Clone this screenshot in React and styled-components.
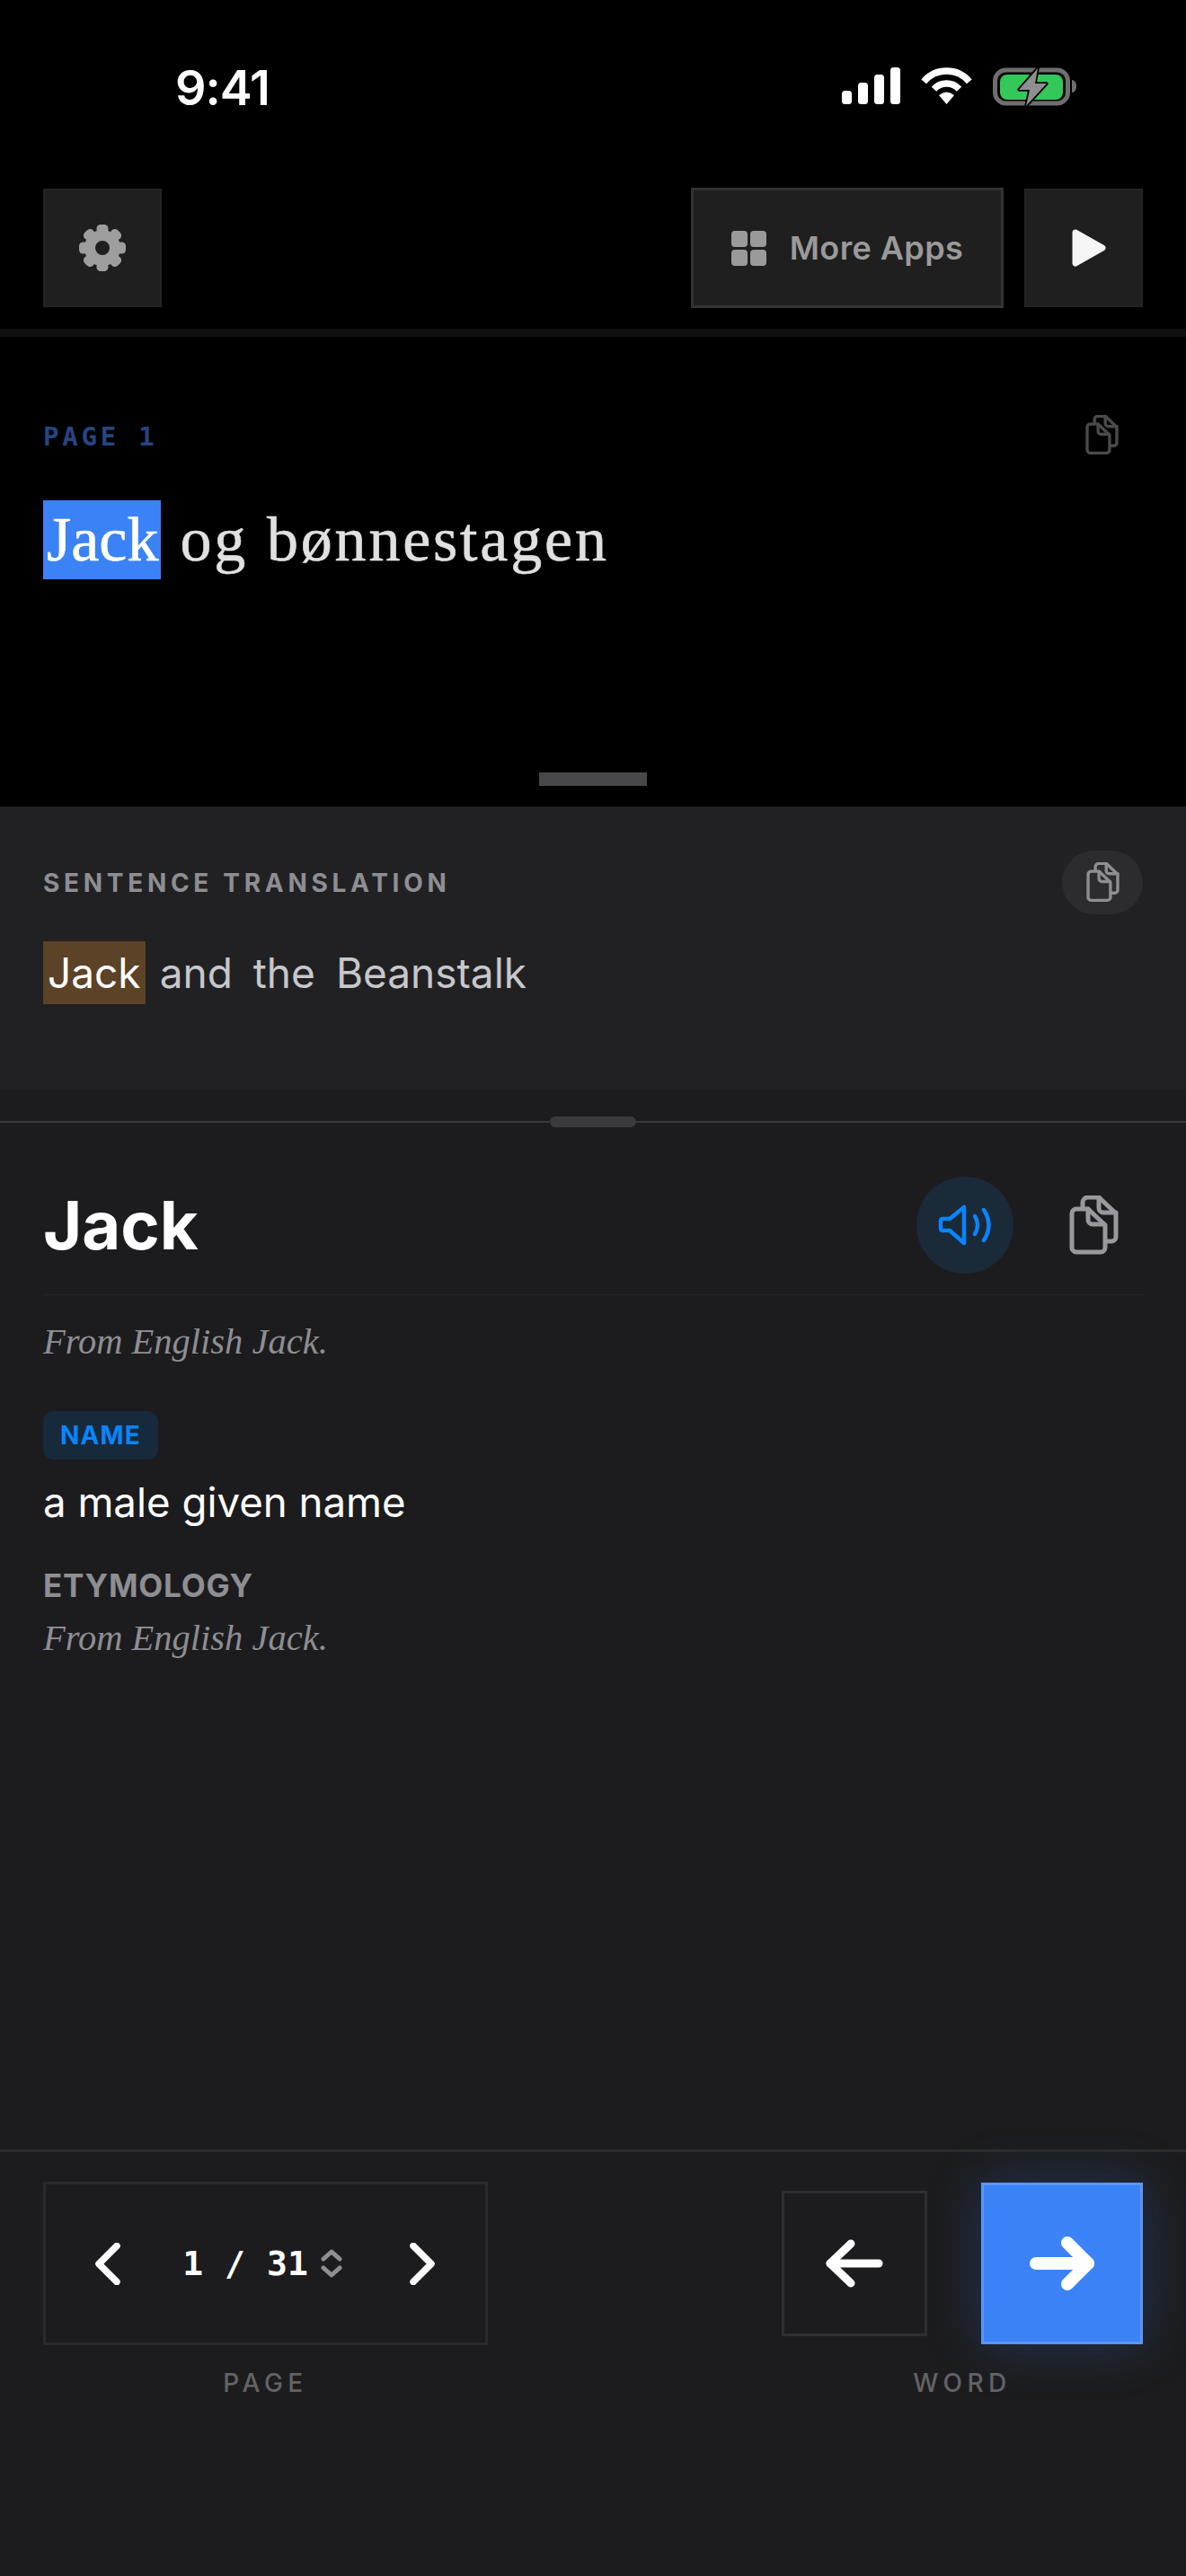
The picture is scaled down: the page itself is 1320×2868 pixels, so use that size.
import React from "react";
import styled, { createGlobalStyle } from "styled-components";

const Global = createGlobalStyle`
  * { box-sizing: border-box; }
  html, body { margin: 0; padding: 0; background: #000; }
  body { font-family: Inter, "Noto Sans", sans-serif; }
`;

const Screen = styled.div`
  width: 1320px;
  height: 2868px;
  display: flex;
  flex-direction: column;
  background: #000;
  overflow: hidden;
`;

const StatusBar = styled.div`
  height: 210px;
  flex: none;
  display: flex;
  justify-content: space-between;
  align-items: flex-start;
  padding: 75px 121px 0 195px;
`;
const Clock = styled.div`
  font-size: 54px;
  line-height: 46px;
  font-weight: 600;
  letter-spacing: -1px;
  color: #fff;
`;
const StatusIcons = styled.div`
  display: flex;
  align-items: flex-start;
  gap: 23px;
`;

const Toolbar = styled.div`
  height: 165px;
  flex: none;
  display: flex;
  align-items: flex-start;
  gap: 23px;
  padding: 0 48px;
  border-bottom: 9px solid #101010;
`;
const ToolButton = styled.button`
  width: 132px;
  height: 132px;
  flex: none;
  margin: 0;
  padding: 0;
  display: flex;
  align-items: center;
  justify-content: center;
  background: #1f1f1f;
  border: 2px solid #242424;
`;
const AppsButton = styled.button`
  width: 348px;
  height: 134px;
  margin: -1px 0 0 auto;
  padding: 0;
  display: flex;
  align-items: center;
  justify-content: center;
  gap: 26px;
  background: #1f1f1f;
  border: 3px solid #333;
  color: #9a9a9a;
  font-family: Inter, sans-serif;
  font-size: 36px;
  font-weight: 600;
  letter-spacing: 0.4px;
`;

const Reader = styled.section`
  height: 523px;
  flex: none;
  display: flex;
  flex-direction: column;
  padding: 87px 48px 23px;
  background: #000;
`;
const RowBetween = styled.div`
  display: flex;
  align-items: center;
  justify-content: space-between;
`;
const PageTag = styled.div`
  padding-top: 3px;
  font-family: "DejaVu Sans Mono", "Liberation Mono", monospace;
  font-size: 29px;
  font-weight: 700;
  letter-spacing: 3.8px;
  color: #27457f;
`;
const ReaderCopy = styled.div`
  display: flex;
  color: #4a4a4c;
  margin-right: 27px;
`;
const Sentence = styled.div`
  margin-top: 51px;
  display: flex;
  align-items: center;
  gap: 21px;
  font-family: "Liberation Serif", serif;
  font-size: 70px;
  letter-spacing: 2.8px;
  line-height: 88px;
  color: #e0e0e0;
  -webkit-text-stroke: 0.6px currentColor;
`;
const ActiveWord = styled.span`
  height: 88px;
  padding: 0 3px 0 4px;
  letter-spacing: 0;
  background: #3b82f6;
  color: #fff;
`;
const Grip = styled.div`
  width: 120px;
  height: 15px;
  margin: auto auto 0;
  background: #48484a;
`;

const Translation = styled.section`
  height: 315px;
  flex: none;
  padding: 49px 48px 0;
  background: #212123;
`;
const SectionLabel = styled.div`
  font-size: 28px;
  font-weight: 700;
  letter-spacing: 4.7px;
  color: #8e8e93;
`;
const CopyPill = styled.div`
  width: 90px;
  height: 71px;
  display: flex;
  align-items: center;
  justify-content: center;
  border-radius: 36px;
  background: #2c2c2e;
  color: #8e8e93;
`;
const TranslatedLine = styled.div`
  margin-top: 30px;
  display: flex;
  align-items: center;
  gap: 23px;
  font-size: 46px;
  line-height: 70px;
  color: #c7c7cc;
`;
const TranslatedWord = styled.span`
  height: 70px;
  padding: 0 5px;
  margin-right: -7px;
  background: #5c4227;
  color: #fff;
`;

const Lower = styled.div`
  flex: 1;
  display: flex;
  flex-direction: column;
  background: #1c1c1e;
`;
const SplitLine = styled.div`
  position: relative;
  margin-top: 35px;
  height: 2px;
  flex: none;
  background: #3a3a3c;
`;
const SplitHandle = styled.div`
  position: absolute;
  left: 612px;
  top: -5px;
  width: 96px;
  height: 12px;
  border-radius: 6px;
  background: #3a3a3c;
`;
const Dictionary = styled.section`
  flex: 1;
  padding: 0 48px;
`;
const EntryHeader = styled.div`
  display: flex;
  align-items: center;
  justify-content: space-between;
  padding: 60px 0 23px;
  border-bottom: 1.5px solid #252527;
`;
const Headword = styled.h1`
  margin: 0;
  font-size: 74px;
  line-height: 108px;
  font-weight: 700;
  color: #fff;
`;
const EntryActions = styled.div`
  display: flex;
  align-items: center;
  gap: 62px;
  padding-right: 27px;
`;
const SpeakButton = styled.div`
  width: 108px;
  height: 108px;
  border-radius: 50%;
  display: flex;
  align-items: center;
  justify-content: center;
  background: #1a2a38;
  color: #0a84ff;
`;
const EntryCopy = styled.div`
  display: flex;
  color: #98989d;
`;
const Gloss = styled.p`
  margin: ${(p) => p.$top}px 0 0;
  font-family: "Liberation Serif", serif;
  font-style: italic;
  font-size: 40.5px;
  line-height: 50px;
  color: #8e8e93;
`;
const PosBadge = styled.div`
  width: 128px;
  height: 54px;
  margin-top: 52px;
  display: flex;
  align-items: center;
  justify-content: center;
  border-radius: 12px;
  background: #172a3c;
  color: #0a84ff;
  font-size: 28px;
  font-weight: 700;
  letter-spacing: 1.2px;
`;
const Definition = styled.p`
  margin: 20px 0 0;
  font-size: 45.6px;
  line-height: 56px;
  color: #fff;
`;
const SubHeading = styled.h2`
  margin: 44px 0 0;
  font-size: 35px;
  line-height: 40px;
  font-weight: 700;
  letter-spacing: 0.8px;
  color: #8e8e93;
`;

const Footer = styled.footer`
  height: 475px;
  flex: none;
  display: flex;
  align-items: flex-start;
  justify-content: space-between;
  padding: 33px 48px 0;
  border-top: 3px solid #2c2c2e;
`;
const Group = styled.div`
  display: flex;
  flex-direction: column;
  align-items: center;
`;
const Controls = styled.div`
  height: 182px;
  display: flex;
  align-items: center;
`;
const GroupLabel = styled.div`
  margin-top: 27px;
  font-size: 28px;
  line-height: 30px;
  font-weight: 500;
  letter-spacing: 5.5px;
  color: #636366;
`;
const Pager = styled.div`
  width: 495px;
  height: 182px;
  display: flex;
  align-items: center;
  justify-content: space-between;
  padding: 0 56px 0 55px;
  border: 3px solid #2a2a2c;
`;
const PagerText = styled.div`
  display: flex;
  align-items: center;
  gap: 24px;
  margin-left: -6px;
  font-family: "DejaVu Sans Mono", "Liberation Mono", monospace;
  font-weight: 700;
  font-size: 38px;
  color: #fff;
`;
const PrevButton = styled.div`
  width: 162px;
  height: 162px;
  display: flex;
  align-items: center;
  justify-content: center;
  border: 3px solid #2f2f31;
`;
const NextButton = styled.div`
  width: 180px;
  height: 180px;
  margin-left: 60px;
  display: flex;
  align-items: center;
  justify-content: center;
  background: #3b82f6;
  border: 3px solid #5a96f8;
  box-shadow: 0 0 60px rgba(59, 130, 246, 0.25);
`;

const Signal = () => (
  <svg width="65" height="41" viewBox="0 0 65 41" fill="#fff">
    <rect x="0" y="26" width="11" height="15" rx="3.5" />
    <rect x="18" y="17" width="11" height="24" rx="3.5" />
    <rect x="36" y="8" width="11" height="33" rx="3.5" />
    <rect x="54" y="0" width="11" height="41" rx="3.5" />
  </svg>
);
const Wifi = () => (
  <svg width="57" height="41" viewBox="0 0 57 41" fill="none" stroke="#fff" strokeWidth="7.5">
    <path d="M3.2 15.8A33 33 0 0 1 53.8 15.8" />
    <path d="M14.5 24.2A19 19 0 0 1 42.5 24.2" />
    <path d="M28.5 41L20 31Q28.5 24 37 31Z" fill="#fff" stroke="none" />
  </svg>
);
const BatteryGlyph = styled.svg`
  overflow: visible;
`;
const Battery = () => (
  <BatteryGlyph width="94" height="44" viewBox="0 0 94 44">
    <rect x="2.5" y="3" width="81" height="37" rx="12" fill="none" stroke="#6e6e6e" strokeWidth="5" />
    <rect x="8" y="8" width="70" height="28" rx="8" fill="#34c759" />
    <path d="M88 14c3 0 5 3 5 7s-2 7-5 7z" fill="#6e6e6e" />
    <path d="M50 1L29 25H41L37 43L60 18H47Z" fill="#8e8e8e" stroke="#000" strokeWidth="3.5" strokeLinejoin="round" paintOrder="stroke" />
  </BatteryGlyph>
);
const Gear = () => (
  <svg width="52" height="52" viewBox="-26 -26 52 52" fill="#9e9e9e">
    <circle r="14" fill="none" stroke="#9e9e9e" strokeWidth="12" />
    {[0, 45, 90, 135, 180, 225, 270, 315].map((a) => (
      <rect key={a} x="-6.5" y="-26" width="13" height="10" rx="4.5" transform={`rotate(${a})`} />
    ))}
  </svg>
);
const AppsGrid = () => (
  <svg width="39" height="39" viewBox="0 0 39 39" fill="#9a9a9a">
    <rect width="18" height="18" rx="4" />
    <rect x="21" width="18" height="18" rx="4" />
    <rect y="21" width="18" height="18" rx="4" />
    <rect x="21" y="21" width="18" height="18" rx="4" />
  </svg>
);
const PlayGlyph = styled.svg`
  margin-left: 12px;
`;
const Play = () => (
  <PlayGlyph width="38" height="42" viewBox="0 0 38 42">
    <path d="M4 4L34 21L4 38Z" fill="#f5f5f5" stroke="#f5f5f5" strokeWidth="7" strokeLinejoin="round" />
  </PlayGlyph>
);
const CopyIcon = ({ w }) => (
  <svg width={w} height={(w * 66) / 55} viewBox="0 0 55 66" fill="none" stroke="currentColor" strokeWidth="5" strokeLinejoin="round" strokeLinecap="round">
    <path d="M8 15H21L40 33V58a5 5 0 0 1-5 5H8a5 5 0 0 1-5-5V20a5 5 0 0 1 5-5Z" />
    <path d="M21 15V27a5 5 0 0 0 5 5H39" />
    <path d="M15 13V8a6 6 0 0 1 6-6H33L52 20V46a5 5 0 0 1-5 5H42" />
    <path d="M33 2V14a5 5 0 0 0 5 5H52" />
  </svg>
);
const Speaker = () => (
  <svg width="60" height="48" viewBox="0 0 60 48" fill="none" stroke="currentColor" strokeWidth="4.5" strokeLinejoin="round" strokeLinecap="round">
    <path d="M3 19a2 2 0 0 1 2-2H13L29 4V44L13 30H5a2 2 0 0 1-2-2Z" />
    <path d="M41 14Q47 24 41 34" />
    <path d="M51 7Q62 24 51 41" />
  </svg>
);
const Chevron = ({ flip }) => (
  <svg width="28" height="47" viewBox="0 0 28 47" fill="none" stroke="#fff" strokeWidth="7.5" strokeLinecap="round" strokeLinejoin="round">
    <path d={flip ? "M4 3.5L24 23.5L4 43.5" : "M24 3.5L4 23.5L24 43.5"} />
  </svg>
);
const UpDownGlyph = styled.svg`
  margin-left: -10px;
`;
const UpDown = () => (
  <UpDownGlyph width="24" height="32" viewBox="0 0 24 32" fill="none" stroke="#8e8e93" strokeWidth="5" strokeLinecap="round" strokeLinejoin="round">
    <path d="M3 11L12 3L21 11" />
    <path d="M3 21L12 29L21 21" />
  </UpDownGlyph>
);
const ArrowLeft = () => (
  <svg width="64" height="54" viewBox="0 0 64 54" fill="none" stroke="#fff" strokeWidth="9" strokeLinecap="round" strokeLinejoin="round">
    <path d="M5 27H59" />
    <path d="M28 5L5 27L28 49" />
  </svg>
);
const ArrowRight = () => (
  <svg width="72" height="60" viewBox="0 0 72 60" fill="none" stroke="#fff" strokeWidth="14" strokeLinecap="round" strokeLinejoin="round">
    <path d="M7 30H65" />
    <path d="M42 7L65 30L42 53" />
  </svg>
);

export default function App() {
  return (
    <Screen>
      <Global />
      <StatusBar>
        <Clock>9:41</Clock>
        <StatusIcons>
          <Signal />
          <Wifi />
          <Battery />
        </StatusIcons>
      </StatusBar>
      <Toolbar>
        <ToolButton aria-label="Settings"><Gear /></ToolButton>
        <AppsButton><AppsGrid />More Apps</AppsButton>
        <ToolButton aria-label="Play"><Play /></ToolButton>
      </Toolbar>
      <Reader>
        <RowBetween>
          <PageTag>PAGE 1</PageTag>
          <ReaderCopy><CopyIcon w={37} /></ReaderCopy>
        </RowBetween>
        <Sentence>
          <ActiveWord>Jack</ActiveWord>
          <span>og</span>
          <span>bønnestagen</span>
        </Sentence>
        <Grip />
      </Reader>
      <Translation>
        <RowBetween>
          <SectionLabel>SENTENCE TRANSLATION</SectionLabel>
          <CopyPill><CopyIcon w={37} /></CopyPill>
        </RowBetween>
        <TranslatedLine>
          <TranslatedWord>Jack</TranslatedWord>
          <span>and</span>
          <span>the</span>
          <span>Beanstalk</span>
        </TranslatedLine>
      </Translation>
      <Lower>
        <SplitLine><SplitHandle /></SplitLine>
        <Dictionary>
          <EntryHeader>
            <Headword>Jack</Headword>
            <EntryActions>
              <SpeakButton><Speaker /></SpeakButton>
              <EntryCopy><CopyIcon w={55} /></EntryCopy>
            </EntryActions>
          </EntryHeader>
          <Gloss $top={27}>From English Jack.</Gloss>
          <PosBadge>NAME</PosBadge>
          <Definition>a male given name</Definition>
          <SubHeading>ETYMOLOGY</SubHeading>
          <Gloss $top={14}>From English Jack.</Gloss>
        </Dictionary>
        <Footer>
          <Group>
            <Controls>
              <Pager>
                <Chevron />
                <PagerText>
                  <span>1</span>
                  <span>/</span>
                  <span>31</span>
                  <UpDown />
                </PagerText>
                <Chevron flip />
              </Pager>
            </Controls>
            <GroupLabel>PAGE</GroupLabel>
          </Group>
          <Group>
            <Controls>
              <PrevButton><ArrowLeft /></PrevButton>
              <NextButton><ArrowRight /></NextButton>
            </Controls>
            <GroupLabel>WORD</GroupLabel>
          </Group>
        </Footer>
      </Lower>
    </Screen>
  );
}
